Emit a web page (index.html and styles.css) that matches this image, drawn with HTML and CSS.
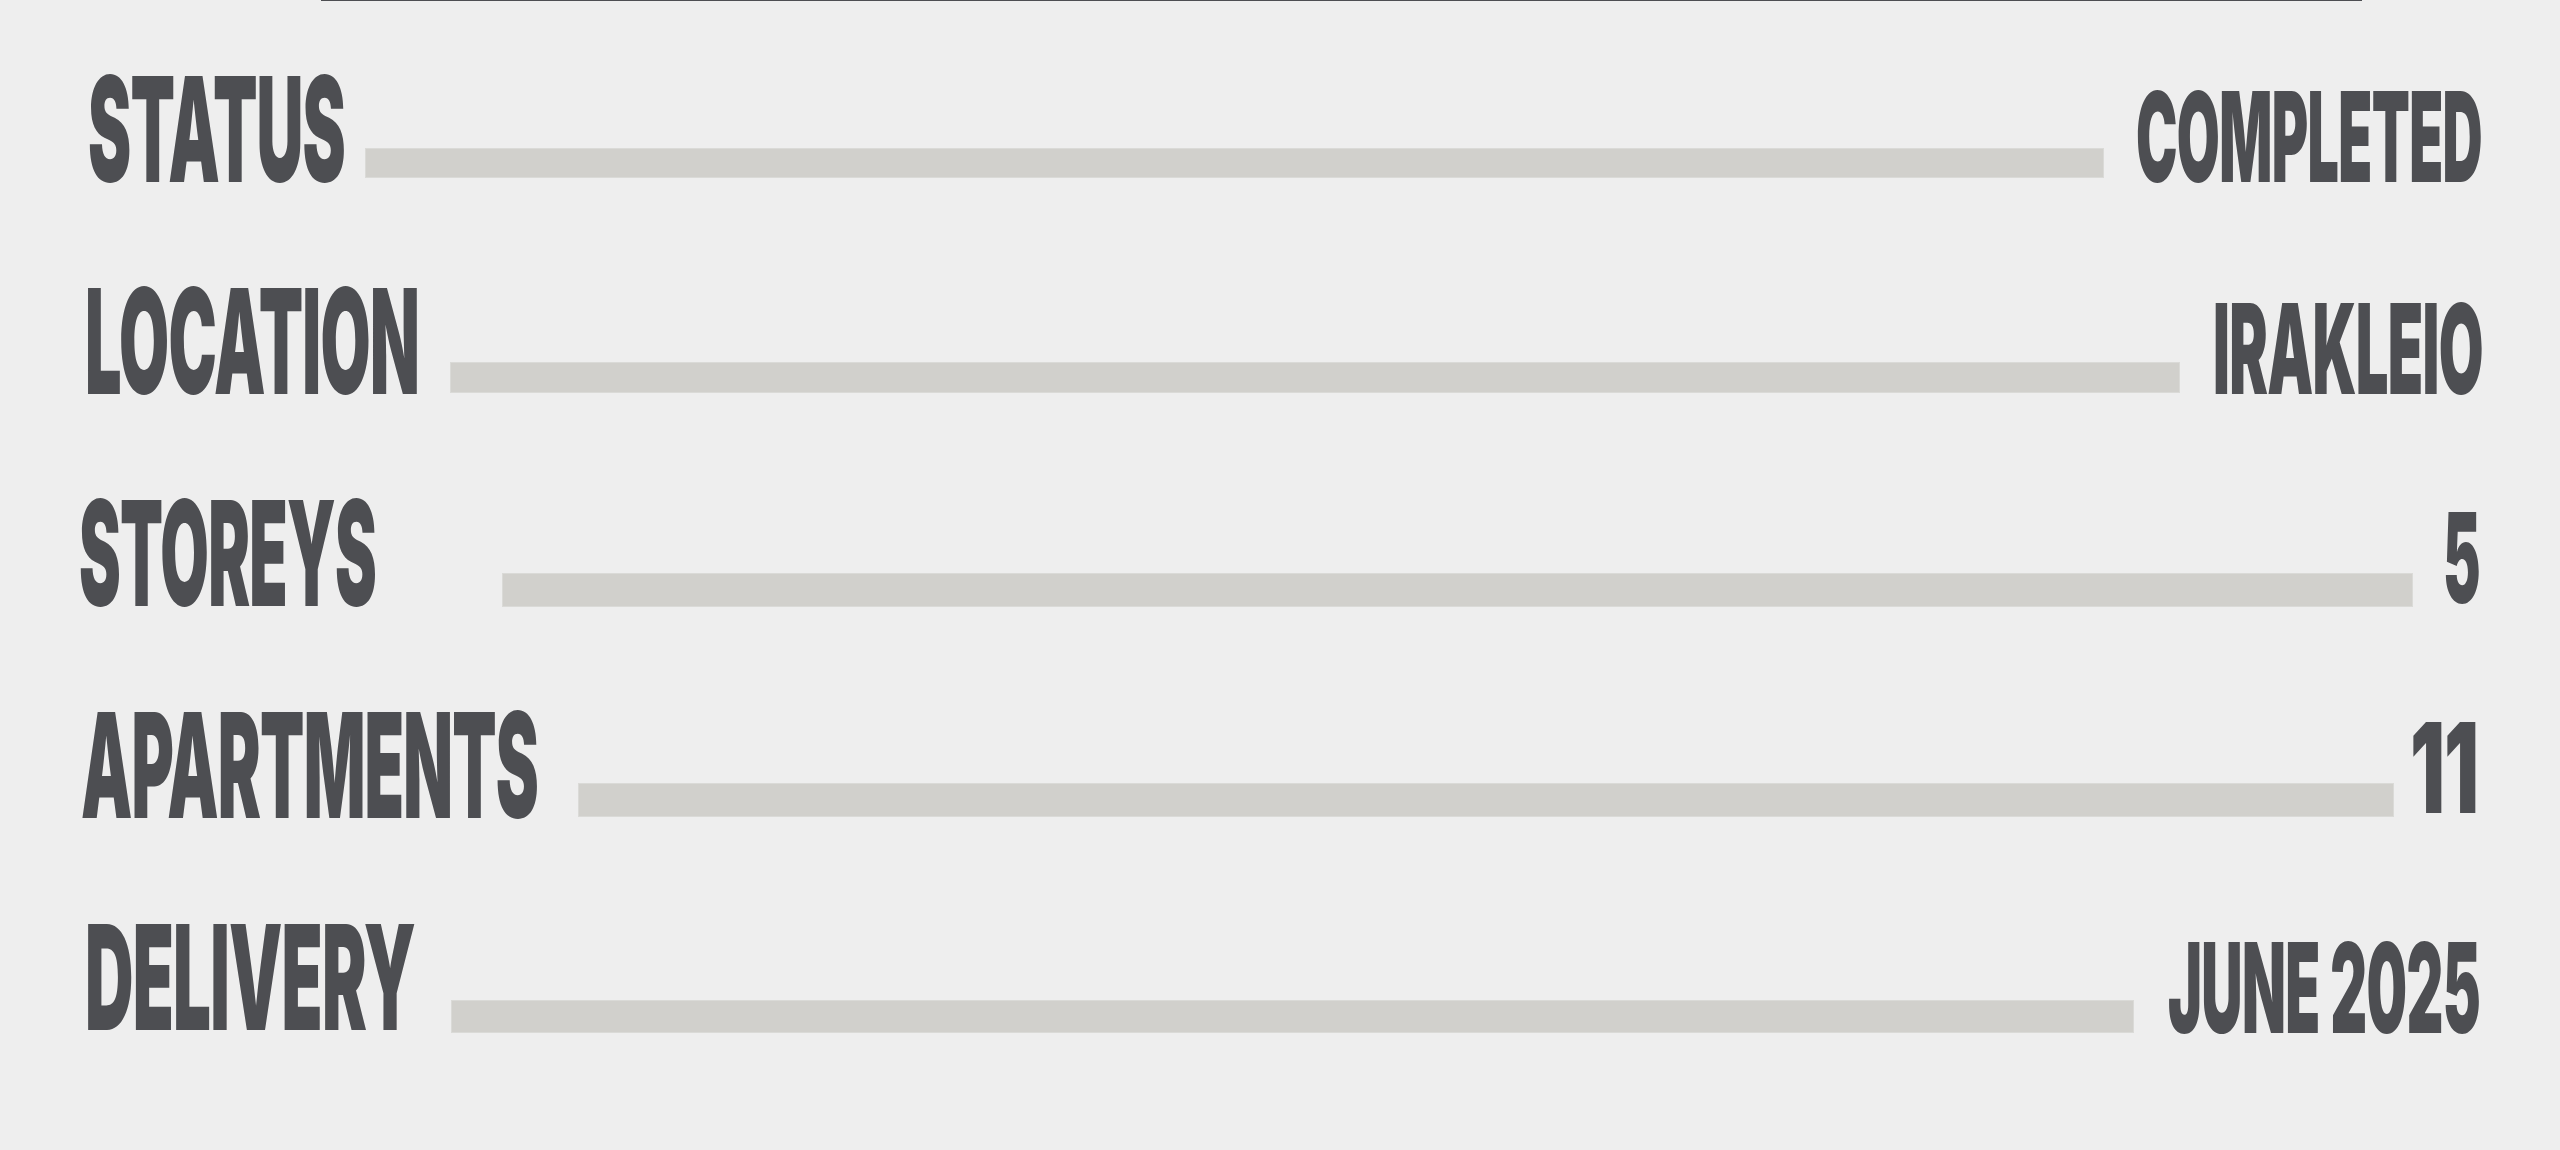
FILE: index.html
```html
<!DOCTYPE html>
<html lang="en">
<head>
<meta charset="utf-8">
<title>Project specs</title>
<link rel="stylesheet" href="styles.css">
</head>
<body>
<div class="rule"></div>
<div class="specs">
  <div class="row row--status">
    <svg class="label" width="257" height="205"><text x="0" y="160" textLength="257" lengthAdjust="spacingAndGlyphs">STATUS</text></svg>
    <div class="bar"></div>
    <svg class="value" width="346" height="205"><text x="346" y="160" text-anchor="end" textLength="346" lengthAdjust="spacingAndGlyphs">COMPLETED</text></svg>
  </div>
  <div class="row row--location">
    <svg class="label" width="334" height="205"><text x="0" y="160" textLength="334" lengthAdjust="spacingAndGlyphs">LOCATION</text></svg>
    <div class="bar"></div>
    <svg class="value" width="270" height="205"><text x="270" y="160" text-anchor="end" textLength="270" lengthAdjust="spacingAndGlyphs">IRAKLEIO</text></svg>
  </div>
  <div class="row row--storeys">
    <svg class="label" width="297" height="205"><text x="0" y="160" textLength="297" lengthAdjust="spacingAndGlyphs">STOREYS</text></svg>
    <div class="bar"></div>
    <svg class="value" width="37" height="205"><text x="37" y="157" text-anchor="end" textLength="37" lengthAdjust="spacingAndGlyphs">5</text></svg>
  </div>
  <div class="row row--apartments">
    <svg class="label" width="457" height="205"><text x="0" y="160" textLength="457" lengthAdjust="spacingAndGlyphs">APARTMENTS</text></svg>
    <div class="bar"></div>
    <svg class="value" width="68" height="205"><text x="68" y="155" text-anchor="end" textLength="68" lengthAdjust="spacingAndGlyphs">11</text></svg>
  </div>
  <div class="row row--delivery">
    <svg class="label" width="330" height="205"><text x="0" y="160" textLength="330" lengthAdjust="spacingAndGlyphs">DELIVERY</text></svg>
    <div class="bar"></div>
    <svg class="value" width="312" height="205"><text x="312" y="163" text-anchor="end" textLength="312" lengthAdjust="spacingAndGlyphs">JUNE 2025</text></svg>
  </div>
</div>
</body>
</html>
```
FILE: styles.css
```css
html, body {
  margin: 0;
  padding: 0;
  background: #eeeeee;
}

body {
  width: 2560px;
  height: 1150px;
  overflow: hidden;
  font-family: "Inter", "Liberation Sans", sans-serif;
  color: #4d4e52;
}

.rule {
  margin-left: 321px;
  width: 2041px;
  height: 1px;
  background: #4d4e52;
}

.specs {
  display: flex;
  flex-direction: column;
  gap: 7px;
  padding: 21px 77px 0 82px;
}

.row {
  display: flex;
  align-items: flex-end;
  height: 205px;
}

.label,
.value {
  flex: none;
  overflow: visible;
}

.label text,
.value text {
  fill: #4d4e52;
  font-family: "Inter", "Liberation Sans", sans-serif;
  font-weight: 900;
  letter-spacing: -0.012em;
}

.label text {
  font-size: 146px;
}

.value text {
  font-size: 125px;
}

.bar {
  flex: 1 1 auto;
  height: 30px;
  background: #d1d0cc;
  box-shadow: 0 0 0 1px #dadad7;
}

/* per-row placement */
.row--status .label { margin-left: 6px; }
.row--status .bar { margin: 0 33px 50px 21px; height: 28px; }
.row--status .value { margin-right: 1px; }

.row--location .label { margin-left: 3px; }
.row--location .bar { margin: 0 34px 47px 32px; height: 29px; }
.row--location .value { margin-right: 0; }

.row--storeys .label { margin-left: -3px; }
.row--storeys .bar { margin: 0 31px 45px 127px; height: 32px; }
.row--storeys .value { margin-right: 3px; }

.row--apartments .label { margin-left: -1px; }
.row--apartments .bar { margin: 0 17px 47px 41px; height: 32px; }
.row--apartments .value { margin-right: 5px; }

.row--delivery .label { margin-left: 3px; }
.row--delivery .bar { margin: 0 35px 43px 37px; height: 31px; }
.row--delivery .value { margin-right: 3px; }
```
